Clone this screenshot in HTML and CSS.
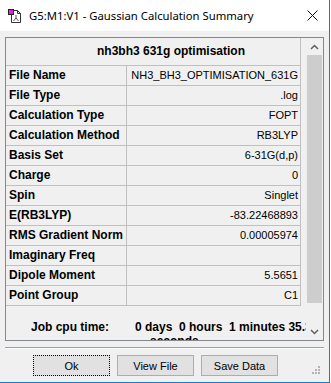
FILE: index.html
```html
<!DOCTYPE html>
<html lang="en">
<head>
    <meta charset="UTF-8">
    <title>G5:M1:V1 - Gaussian Calculation Summary</title>
    <link rel="stylesheet" href="styles.css">
</head>
<body>
<div class="window">
    <div class="titlebar">
        <svg class="app-icon" width="13" height="14" viewBox="0 0 13 14">
            <path d="M3.5 1.5 H9.5 L12.5 4.5 V13.5 H3.5 Z" fill="#fff" stroke="#333"/>
            <path d="M9.5 1.5 V4.5 H12.5" fill="none" stroke="#333"/>
            <path d="M8 6 V9 M8 9 L5.5 12 M8 9 L10.5 12" stroke="#555" fill="none"/>
            <rect x="0.5" y="0.5" width="5" height="5" fill="#e020e0" stroke="#222"/>
        </svg>
        <span class="title">G5:M1:V1 - Gaussian Calculation Summary</span>
        <svg class="close" width="11" height="11" viewBox="0 0 11 11">
            <path d="M0.5 0.5 L10.5 10.5 M10.5 0.5 L0.5 10.5" stroke="#111" stroke-width="1"/>
        </svg>
    </div>

    <div class="client">
        <div class="frame">
            <div class="view">
                <div class="sheet">
                    <div class="caption">nh3bh3 631g optimisation</div>
                    <div class="row"><div class="label">File Name</div><div class="value">NH3_BH3_OPTIMISATION_631G</div></div>
                    <div class="row"><div class="label">File Type</div><div class="value">.log</div></div>
                    <div class="row"><div class="label">Calculation Type</div><div class="value">FOPT</div></div>
                    <div class="row"><div class="label">Calculation Method</div><div class="value">RB3LYP</div></div>
                    <div class="row"><div class="label">Basis Set</div><div class="value">6-31G(d,p)</div></div>
                    <div class="row"><div class="label">Charge</div><div class="value">0</div></div>
                    <div class="row"><div class="label">Spin</div><div class="value">Singlet</div></div>
                    <div class="row"><div class="label">E(RB3LYP)</div><div class="value">-83.22468893</div></div>
                    <div class="row"><div class="label">RMS Gradient Norm</div><div class="value">0.00005974</div></div>
                    <div class="row"><div class="label">Imaginary Freq</div><div class="value"></div></div>
                    <div class="row"><div class="label">Dipole Moment</div><div class="value">5.5651</div></div>
                    <div class="row"><div class="label">Point Group</div><div class="value">C1</div></div>
                </div>
                <div class="cpu">
                    <div class="cpu-label">Job cpu time:</div>
                    <div class="cpu-value">
                        <div class="cpu-line">0 days  0 hours  1 minutes 35.3</div>
                        <div class="cpu-line second">seconds</div>
                    </div>
                </div>
            </div>
            <div class="scrollbar">
                <div class="sb-btn">
                    <svg width="9" height="6" viewBox="0 0 9 6"><path d="M1 5 L4.5 1.5 L8 5" fill="none" stroke="#606060" stroke-width="1.5"/></svg>
                </div>
                <div class="sb-track"><div class="sb-thumb"></div></div>
                <div class="sb-btn">
                    <svg width="9" height="6" viewBox="0 0 9 6"><path d="M1 1 L4.5 4.5 L8 1" fill="none" stroke="#606060" stroke-width="1.5"/></svg>
                </div>
            </div>
        </div>

        <div class="separator"></div>

        <div class="buttons">
            <button class="btn default">Ok</button>
            <button class="btn">View File</button>
            <button class="btn">Save Data</button>
        </div>

        <svg class="grip" width="8" height="8" viewBox="0 0 8 8">
            <rect x="6" y="0" width="2" height="2" fill="#b4b4b4"/>
            <rect x="3" y="3" width="2" height="2" fill="#b4b4b4"/>
            <rect x="6" y="3" width="2" height="2" fill="#b4b4b4"/>
            <rect x="0" y="6" width="2" height="2" fill="#b4b4b4"/>
            <rect x="3" y="6" width="2" height="2" fill="#b4b4b4"/>
            <rect x="6" y="6" width="2" height="2" fill="#b4b4b4"/>
        </svg>
    </div>
</div>
</body>
</html>
```

FILE: styles.css
```css
html, body {
    margin: 0;
    background: #ffffff;
}

body {
    font-family: 'Liberation Sans', Arial, sans-serif;
    color: #000;
}

.window {
    width: 329px;
    height: 382px;
    background: #f0f0f0;
    border-right: 1px solid #1979ca;
    border-bottom: 1px solid #1979ca;
    display: flex;
    flex-direction: column;
}

.titlebar {
    height: 31px;
    flex-shrink: 0;
    background: #ffffff;
    display: flex;
    align-items: center;
    padding-left: 8px;
}

.app-icon {
    margin-right: 8px;
    margin-top: 1px;
}

.title {
    font-family: 'Noto Sans', sans-serif;
    font-size: 11.3px;
    color: #000;
}

.close {
    margin-left: auto;
    margin-right: 11px;
}

.client {
    flex: 1;
    position: relative;
    padding: 6px 0 0 5px;
}

.frame {
    width: 319px;
    height: 304px;
    box-sizing: border-box;
    border: 1px solid #828790;
    display: flex;
}

.view {
    width: 300px;
    overflow: hidden;
}

.sheet {
    width: 294px;
    border-right: 1px solid #c0c0c0;
    font-size: 12px;
}

.caption {
    height: 27px;
    line-height: 27px;
    border-bottom: 1px solid #c0c0c0;
    text-align: center;
    font-weight: bold;
    padding-left: 36px;
}

.row {
    display: flex;
    height: 20px;
    box-sizing: border-box;
    border-bottom: 1px solid #c0c0c0;
    line-height: 19px;
}

.label {
    width: 121px;
    box-sizing: border-box;
    border-right: 1px solid #c0c0c0;
    padding-left: 3px;
    font-weight: bold;
    white-space: nowrap;
}

.value {
    flex: 1;
    text-align: right;
    padding-right: 2px;
    font-size: 11px;
    white-space: nowrap;
}

.cpu {
    display: flex;
    padding-top: 14px;
    font-size: 12px;
    font-weight: bold;
    line-height: 14px;
}

.cpu-label {
    width: 104px;
    padding-left: 25px;
    flex-shrink: 0;
}

.cpu-line {
    white-space: pre;
}

.cpu-line.second {
    padding-left: 15px;
}

.scrollbar {
    width: 17px;
    display: flex;
    flex-direction: column;
    background: #f0f0f0;
}

.sb-btn {
    height: 17px;
    display: flex;
    align-items: center;
    justify-content: center;
}

.sb-track {
    flex: 1;
}

.sb-thumb {
    height: 248px;
    margin: 0 1px;
    background: #cdcdcd;
}

.separator {
    width: 319px;
    margin-top: 6px;
    border-top: 1px solid #a0a0a0;
    border-bottom: 1px solid #ffffff;
}

.buttons {
    display: flex;
    gap: 7px;
    margin-top: 6px;
    padding-left: 28px;
}

.btn {
    width: 77px;
    height: 21px;
    padding: 0;
    background: #e1e1e1;
    border: 1px solid #adadad;
    font-family: 'Liberation Sans', Arial, sans-serif;
    font-size: 11px;
    color: #000;
}

.btn.default {
    border: 1px dotted #000;
}

.grip {
    position: absolute;
    right: 9px;
    bottom: 8px;
}
```
